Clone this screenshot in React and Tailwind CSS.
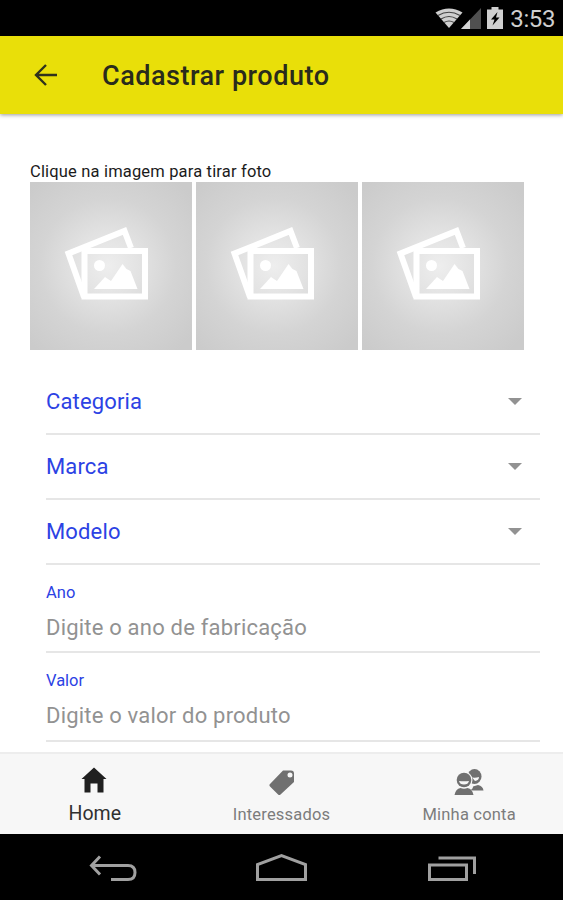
const roboto = 'font-[Roboto,sans-serif]';

function StatusBar() {
  return (
    <div className="flex h-9 items-center justify-end bg-black pr-2 text-[#cfcfcf]">
      <svg width="28" height="20" viewBox="0 0 28 20" className="mt-[-1px]">
        <path d="M.5 4.500Q14-3.500 27.500 4.500L14 20Z" fill="#cfcfcf" />
        <path d="M3 7.500Q14 1 25 7.500M6 11Q14 6 22 11M9 14.500Q14 11.500 19 14.500" fill="none" stroke="#444" strokeWidth="1.200" />
      </svg>
      <svg width="20" height="21" viewBox="0 0 20 21" className="ml-[-2px]">
        <path d="M0 21L20 0V21Z" fill="#505050" />
        <path d="M0 21L9 11.500V21Z" fill="#d5d5d5" />
      </svg>
      <svg width="16" height="22" viewBox="0 0 16 22" className="ml-[6px] mt-[-1px]">
        <path d="M4.500 0h7v2.500H16V22H0V2.500h4.500z" fill="#cfcfcf" />
        <path d="M10.500 5L4 12.500h3.500L5.500 18.500 12.500 10.500H9z" fill="#000" />
      </svg>
      <span className="ml-[7px] mt-[2px] text-[24px] leading-6 tracking-[-0.4px]">3:53</span>
    </div>
  );
}

function PhotoTile() {
  return (
    <div className="h-[168px] w-[162px] bg-[radial-gradient(circle_at_48%_50%,#eeeeee_0%,#e2e2e2_28%,#d4d4d4_57%,#cbcbcb_92%)]">
      <svg width="162" height="168" viewBox="0 0 162 168" fill="none">
        <path d="M101 66L94.500 49 38.500 71.500 54 115" stroke="#fff" strokeWidth="6" />
        <rect x="54.500" y="69" width="60.500" height="45.500" stroke="#fff" strokeWidth="6" />
        <circle cx="69.500" cy="83.500" r="5.500" fill="#fff" />
        <path d="M64 107l11-12 6 4L92.500 82l4 5 4 2 7 18z" fill="#fff" />
      </svg>
    </div>
  );
}

function SelectRow({ label, height }) {
  return (
    <div className={`flex items-center justify-between border-b-2 border-[#e6e6e6] pr-[18px] ${height}`}>
      <span className="mt-px text-[22px] leading-7 tracking-[0.15px] text-[#2c42e4]">{label}</span>
      <span className="h-[7px] w-[14px] bg-[#929292] [clip-path:polygon(0_0,100%_0,50%_100%)]" />
    </div>
  );
}

function InputRow({ label, placeholder, height }) {
  return (
    <div className={`border-b-2 border-[#e6e6e6] pt-[16px] ${height}`}>
      <div className="text-[16.500px] leading-6 text-[#2c42e4]">{label}</div>
      <div className="mt-[9px] text-[22px] leading-7 tracking-[0.2px] text-[#929292]">{placeholder}</div>
    </div>
  );
}

function HomeIcon() {
  return (
    <svg width="26" height="26" viewBox="0 0 26 26" className="mt-[-3px]">
      <path d="M13 0.500L0.500 12h3v13.500h6V16.500h7v9h6V12h3z" fill="#202020" />
    </svg>
  );
}

function TagIcon() {
  return (
    <svg width="26" height="26" viewBox="0 0 26 26" className="mt-[3px]">
      <path fillRule="evenodd" d="M14 .5h8q3 0 3 3V12L11.500 24.500q-1.200 1-2.400 0L1 16.500q-1.200-1.200 0-2.400zM21 2.500a2.500 2.500 0 1 0 0 5 2.500 2.500 0 0 0 0-5z" fill="#707070" />
    </svg>
  );
}

function PeopleIcon() {
  return (
    <svg width="30" height="27" viewBox="0 0 30 27" className="mt-[3px]">
      <ellipse cx="20.500" cy="7.500" rx="7" ry="7.500" fill="#707070" />
      <path d="M18 8.500q4 .5 7-.5 0 3.500-4 4z" fill="#f7f7f7" />
      <path d="M15 21.500q4-1 4-4l5-1.500q5 1 5.500 5.500z" fill="#707070" />
      <circle cx="10" cy="11" r="8.500" fill="#f7f7f7" />
      <path d="M.5 26q1-6 6-7 3.500 1.500 7 0 5 1 6 7z" fill="#707070" stroke="#f7f7f7" strokeWidth="1" paintOrder="stroke" />
      <circle cx="10" cy="11" r="7.300" fill="#707070" />
      <path d="M5 12q5 .6 10 0-.8 3.500-5 3.500t-5-3.500z" fill="#f7f7f7" />
    </svg>
  );
}

function Tab({ label, active, children }) {
  return (
    <div className={`flex flex-1 flex-col items-center ${active ? 'text-[#303030]' : 'text-[#7c7c7c]'}`}>
      <div className="flex h-[30px] items-center">{children}</div>
      <span className={`leading-6 ${active ? 'mt-[6px] pl-[2px] text-[19.500px] tracking-[0.1px]' : 'mt-[7px] text-[16.500px] tracking-[0.2px]'}`}>{label}</span>
    </div>
  );
}

export default function App() {
  return (
    <div className={`flex h-[900px] w-[563px] flex-col overflow-hidden bg-white ${roboto}`}>
      <StatusBar />
      <header className="relative flex h-[78px] items-center bg-[#e9df09] pl-[34px] shadow-[0_1px_4px_rgba(0,0,0,0.4)]">
        <svg width="24" height="24" viewBox="0 0 24 24" fill="none" stroke="#30321c" strokeWidth="2.400">
          <path d="M12 2L2 12l10 10M2 12h21" />
        </svg>
        <h1 className="ml-[44px] mt-px text-[27px] font-medium leading-8 tracking-[0.52px] text-[#292b1c]">Cadastrar produto</h1>
      </header>
      <main className="h-[638px] shrink-0">
        <p className="ml-[30px] mt-[48px] text-[16.500px] leading-5 tracking-[0.17px] text-[#1b1b1b]">Clique na imagem para tirar foto</p>
        <div className="ml-[30px] flex gap-1">
          <PhotoTile />
          <PhotoTile />
          <PhotoTile />
        </div>
        <div className="ml-[46px] mt-[20px] w-[494px]">
          <SelectRow label="Categoria" height="h-[65px]" />
          <SelectRow label="Marca" height="h-[65px]" />
          <SelectRow label="Modelo" height="h-[65px]" />
          <InputRow label="Ano" placeholder="Digite o ano de fabricação" height="h-[88px]" />
          <InputRow label="Valor" placeholder="Digite o valor do produto" height="h-[89px]" />
        </div>
      </main>
      <nav className="flex h-[82px] shrink-0 border-t-2 border-[#ededed] bg-[#f7f7f7] pt-[12px]">
        <Tab label="Home" active><HomeIcon /></Tab>
        <Tab label="Interessados"><TagIcon /></Tab>
        <Tab label="Minha conta"><PeopleIcon /></Tab>
      </nav>
      <footer className="flex flex-1 items-center bg-black">
        <svg width="563" height="66" viewBox="0 0 563 66" fill="none" stroke="#a0a0a0" strokeWidth="3">
          <path d="M100 22.500l-8.500 9 8.500 9M92 31.500h36q7 0 7 7t-7 7h-17" />
          <path d="M257.500 45.500V30.500L281.500 21.500l24 9V45.500z" />
          <path d="M429.500 31h37v14.500h-37zM438.500 24h36v16" />
        </svg>
      </footer>
    </div>
  );
}
